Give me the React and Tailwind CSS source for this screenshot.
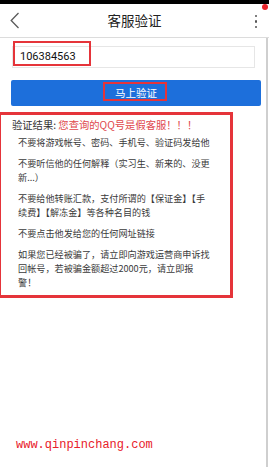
import React from "react";

const tips = [
    "不要将游戏帐号、密码、手机号、验证码发给他",
    "不要听信他的任何解释（实习生、新来的、没更新...）",
    "不要给他转账汇款，支付所谓的【保证金】【手续费】【解冻金】等各种名目的钱",
    "不要点击他发给您的任何网址链接",
    "如果您已经被骗了，请立即向游戏运营商申诉找回帐号，若被骗金额超过2000元，请立即报警！",
];

const App = () => {
    return (
        <div className="relative w-[269px] h-[467px] bg-white overflow-hidden" style={{ fontFamily: '"Noto Sans CJK SC", "Noto Sans", sans-serif' }}>
            <div className="h-[4px] bg-black"></div>

            <header className="h-[34px] grid grid-cols-[40px_1fr_40px] items-center border-b border-[#dcdcdc]">
                <div className="pl-[10px] flex items-center">
                    <svg width="10" height="17" viewBox="0 0 10 17">
                        <path d="M8.5 1 L1.2 8.5 L8.5 16" fill="none" stroke="#5a5a5a" strokeWidth="1.3" />
                    </svg>
                </div>
                <h1 className="text-center text-[13.5px] text-[#222] leading-none pt-[1px]">客服验证</h1>
                <div className="relative flex flex-col items-end pr-[12px] gap-[3.4px] pt-[2px]">
                    <span className="w-[2.4px] h-[2.4px] bg-[#555] rounded-full"></span>
                    <span className="w-[2.4px] h-[2.4px] bg-[#555] rounded-full"></span>
                    <span className="w-[2.4px] h-[2.4px] bg-[#555] rounded-full"></span>
                    <span className="absolute right-[1px] top-[-9px] w-[6px] h-[6px] bg-[#e8232a] rounded-full"></span>
                </div>
            </header>

            <div className="pt-[8px] pl-[12px] pr-[14px]">
                <div className="relative h-[22px] border border-[#e6e6e6] flex items-center pl-[7px] text-[11px] text-[#111]" style={{ fontFamily: 'Roboto, "Noto Sans", sans-serif' }}>
                    106384563
                    <div className="absolute left-[0px] top-[-6px] w-[78px] h-[25px] border-[2.5px] border-[#e5343a]"></div>
                </div>
            </div>

            <div className="pt-[12px] pl-[11px] pr-[8px]">
                <button className="relative w-full h-[26px] bg-[#1d6fdb] rounded-[2px] text-white text-[10.5px] flex items-center justify-center">
                    马上验证
                    <span className="absolute left-[92px] top-[2px] w-[64px] h-[19px] border-[2.5px] border-[#e5343a]"></span>
                </button>
            </div>

            <section className="relative mt-[12px] pl-[12px]">
                <p className="text-[10.3px] leading-[14px] text-[#333]">
                    验证结果: <span className="text-[#e0474c]">您查询的QQ号是假客服！！！</span>
                </p>
                <ul className="mt-[3px] pl-[6px] w-[199px] flex flex-col gap-[7px]">
                    {tips.map((t, i) => (
                        <li key={i} className="text-[9.15px] leading-[14px] text-[#3a3a3a]">{t}</li>
                    ))}
                </ul>
                <div className="absolute left-[-2px] top-[-6px] w-[235px] h-[186px] border-[3px] border-[#e5343a] pointer-events-none"></div>
            </section>

            <div className="absolute left-[16px] top-[437px] text-[12px] leading-[16px] text-[#e8202a]" style={{ fontFamily: '"Liberation Mono", monospace' }}>
                www.qinpinchang.com
            </div>

            <div className="absolute right-[1px] top-[38px] bottom-0 w-[2px] bg-[#cfcfcf]"></div>
        </div>
    );
};

export default App;
